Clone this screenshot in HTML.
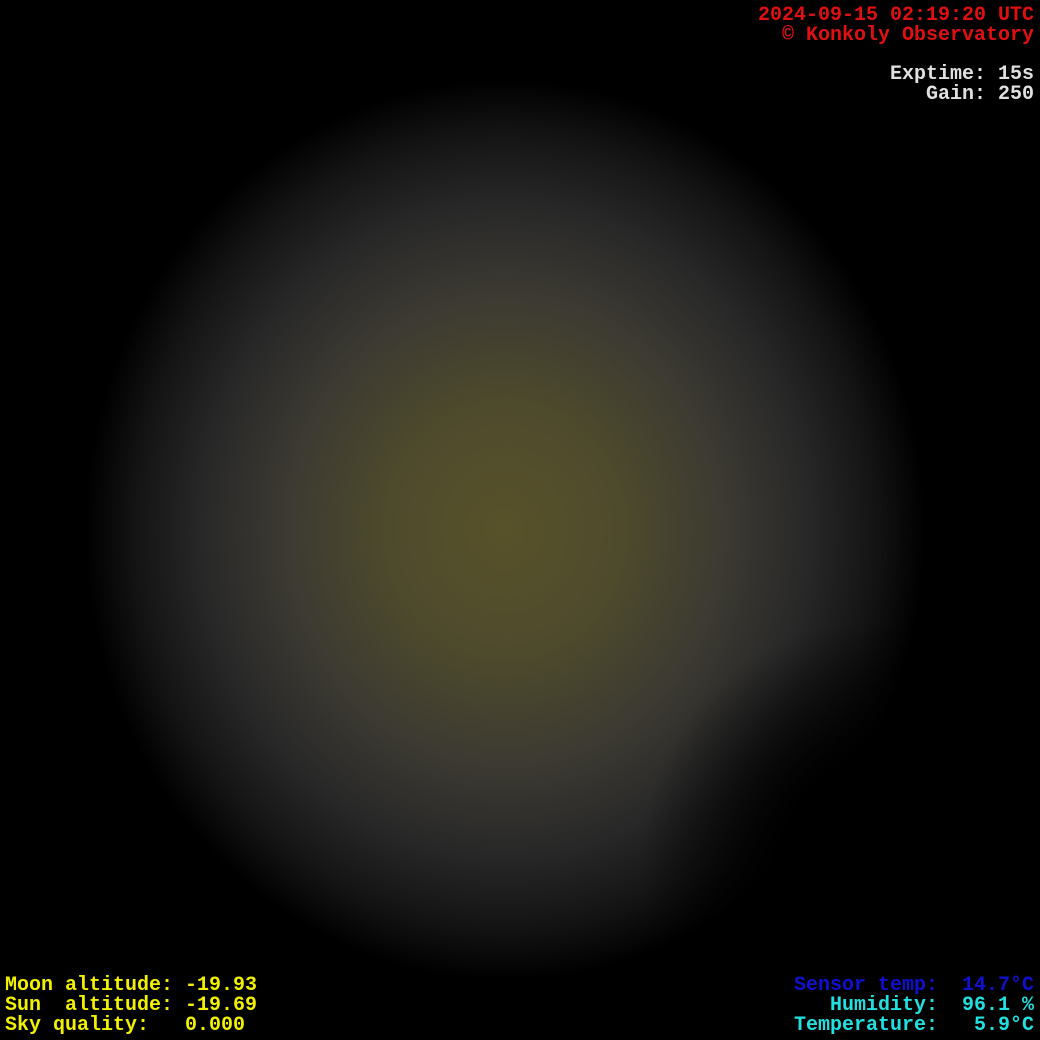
<!DOCTYPE html>
<html><head><style>
html,body{margin:0;padding:0;background:#000;overflow:hidden;width:1040px;height:1040px;}
#c{position:relative;width:1040px;height:1040px;overflow:hidden;background:#000;}
.blob{position:absolute;left:0;top:0;width:1040px;height:1040px;
background:radial-gradient(ellipse 420px 450px at 505px 530px, rgb(88,82,42) 0%, rgb(78,74,44) 28%, rgb(60,58,50) 52%, rgb(40,40,40) 72%, rgb(20,20,20) 88%, rgba(0,0,0,0) 100%);}
.dark{position:absolute;left:600px;top:580px;width:440px;height:460px;background:radial-gradient(circle 240px at 280px 280px, #000 40%, rgba(0,0,0,0) 100%);}
.t{position:absolute;font-family:"Liberation Mono",monospace;font-size:20px;font-weight:bold;line-height:20px;white-space:pre;}
.r{right:6px;text-align:right;}
</style></head><body><div id="c">
<div class="blob"></div>
<div class="dark"></div>
<div class="t r" style="top:6px;color:#e01010">2024-09-15 02:19:20 UTC
© Konkoly Observatory</div>
<div class="t r" style="top:65px;color:#e0e0e0">Exptime: 15s
Gain: 250</div>
<div class="t" style="left:5px;top:976px;color:#f0f000">Moon altitude: -19.93
Sun  altitude: -19.69
Sky quality:   0.000</div>
<div class="t r" style="top:976px;color:#1010d0">Sensor temp:  14.7°C</div>
<div class="t r" style="top:996px;color:#20e0e0">Humidity:  96.1 %
Temperature:   5.9°C</div>
</div></body></html>
